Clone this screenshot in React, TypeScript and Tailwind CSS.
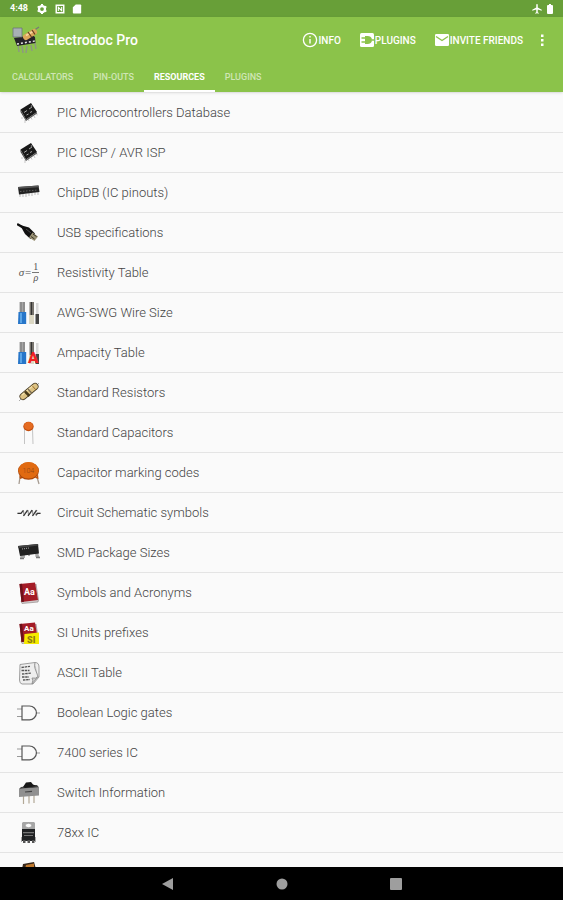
import type { ReactNode } from 'react'

function SoicChip() {
  return (
    <svg viewBox="0 0 24 24" className="size-6">
      <g stroke="#c5c5c5" strokeWidth="1">
        <path d="M5 16v2M8 19v3M11 18l1 2M14 16.500l1 2M17 15l1 2M20 12.500v2M4 9v1" />
      </g>
      <path d="M3.500 8.500 14 2l6 9L9 18.500z" fill="#191919" />
      <path d="M3.500 8.500 9 18.500v1.500L3.500 11z" fill="#444" />
      <path d="m7 11.500 3-2M9.500 14l2-1M12 8l3-2M13 11.500l2-1" stroke="#a8a8a8" strokeWidth="1" />
      <circle cx="14.500" cy="5" r=".8" fill="#999" />
      <path d="M9 18.500 20 11v1.500L9 20z" fill="#555" />
    </svg>
  )
}

function DipChip() {
  return (
    <svg viewBox="0 0 24 24" className="size-6">
      <path d="M3 13v3M6 13v3M9 13v3M12 12v3M15 12v3M18 11v3M21 11v3" stroke="#bbb" strokeWidth="1" />
      <path d="M1 6 21.500 4.500l1 6.500L2 13.500z" fill="#222" />
      <path d="m1 6 20.500-1.500.3 1.700L1.300 7.700z" fill="#555" />
      <path d="M3 10.500 21 9" stroke="#777" strokeWidth=".7" strokeDasharray="1.500 1.500" />
    </svg>
  )
}

function UsbPlug() {
  return (
    <svg viewBox="0 0 24 24" className="size-6">
      <path d="m1 3.500 5 3" stroke="#111" strokeWidth="2.400" strokeLinecap="round" />
      <path d="m3 4 9 2.500 6 6-4.500 5.500L8 13z" fill="#111" />
      <path d="m15.500 11.500 5.500 4-3.500 4.500-5.500-3.500z" fill="#9a9275" />
      <path d="m16 13 3.500 2.500M14 15.500l3.500 2.500" stroke="#3b3729" strokeWidth="1" />
      <path d="m9 8 5 4" stroke="#555" strokeWidth=".8" />
    </svg>
  )
}

function Sigma() {
  return (
    <span className="flex w-6 items-center justify-center gap-px font-['Liberation_Serif',serif] text-[11px] leading-none text-[#555]">
      <i>σ</i>=
      <span className="flex flex-col items-center text-[10px] leading-none">
        <span className="border-b border-[#777] px-px">1</span>
        <i>ρ</i>
      </span>
    </span>
  )
}

function Wires({ red }: { red?: boolean }) {
  return (
    <svg viewBox="0 0 24 24" className="size-6">
      <path d="M2.500 1H8v12H2.500z" fill="#a5a5a5" />
      <path d="M3.500 1h1v12h-1zM6.500 1h1v12h-1z" fill="#777" />
      <path d="M1.500 11h7.700v12H1z" fill="#2776c9" />
      <path d="M3 12h2v10H3z" fill="#5aa4e6" />
      <path d="M12.500 1H17v13h-4.500z" fill="#77736d" />
      <path d="M14 1h1v13h-1z" fill="#333" />
      <path d="M12 14h5v9h-5z" fill="#dcd8c4" />
      <path d="M19 2h2.500v11H19z" fill="#d8d8d8" />
      <path d="M18.500 13H22v10h-3.500z" fill="#444" />
      {red && (
        <text x="11" y="22" fontSize="15" fontWeight="900" fontFamily="Roboto, sans-serif" fill="#f12222">
          A
        </text>
      )}
    </svg>
  )
}

function Resistor() {
  return (
    <svg viewBox="0 0 24 24" className="size-6">
      <path d="m2 20 3-3M18 6l4-4" stroke="#aaa" strokeWidth="1" />
      <path d="M6 15.500 18 5.500" stroke="#453921" strokeWidth="7" strokeLinecap="round" />
      <path d="M6 15.500 18 5.500" stroke="#dcc283" strokeWidth="5.500" strokeLinecap="round" />
      <path d="m5 14 11-9.500" stroke="#f3e2ae" strokeWidth="1.200" />
      <path d="m8 10.500 4.500 4.500" stroke="#473919" strokeWidth="2.500" />
      <path d="m11 8 4 4.500" stroke="#786b54" strokeWidth="1.300" />
      <path d="m15 4.500 4 4.500" stroke="#a16f27" strokeWidth="1" />
    </svg>
  )
}

function DiscCapacitor() {
  return (
    <svg viewBox="0 0 24 24" className="size-6">
      <path d="M7.500 8v15M15.500 8l.5 15" stroke="#c4c4c4" strokeWidth="1" />
      <ellipse cx="11.500" cy="5.500" rx="5.200" ry="4.700" fill="#c34d0d" />
      <ellipse cx="11.500" cy="5" rx="4.400" ry="3.900" fill="#e56c22" />
    </svg>
  )
}

function MarkedCapacitor() {
  return (
    <svg viewBox="0 0 24 24" className="size-6">
      <path d="m3 16-1 7M20 16l2 7" stroke="#a79c92" strokeWidth="1.300" />
      <path d="m2 14 1 4 3-1M21 13l.5 5-3-1" fill="#bd520c" />
      <ellipse cx="11.500" cy="10" rx="10.500" ry="8.700" fill="#a9470b" />
      <ellipse cx="11.500" cy="9.300" rx="10" ry="8.300" fill="#e16a11" />
      <text x="5.500" y="12" fontSize="7" fontFamily="Roboto, sans-serif" fill="#8f4413">
        104
      </text>
    </svg>
  )
}

function ZigZag() {
  return (
    <svg viewBox="0 0 24 24" className="size-6" fill="none" stroke="#333">
      <path d="M.5 12h4l2-2.500.5 5L11 9.500l.5 5 4-5 .5 5 4-5M18 13.500l2-1.500h3.500" strokeWidth=".6" />
      <path d="M.5 12.500H4l2-3M6.500 15l4-6M11 15l4-6M15.500 15l4-6M19 14.500l1.500-2h3" strokeWidth="1.200" />
    </svg>
  )
}

function SmdPackage() {
  return (
    <svg viewBox="0 0 24 24" className="size-6">
      <path d="M4 13h4v4H3zM18 12h3l1.500 4h-4zM11 13h2v2h-2z" fill="#aaa" />
      <path d="M3 17.500h4M19 16.500h4" stroke="#777" strokeWidth="1.500" />
      <path d="m1 5 20-2 1 9.500L3 15z" fill="#202020" />
      <path d="m1 5 20-2 .3 1.500L1.500 7z" fill="#444" />
      <path d="m5 8 7-1" stroke="#999" strokeWidth="1.200" strokeDasharray="1 1" />
    </svg>
  )
}

function Book({ units }: { units?: boolean }) {
  return (
    <svg viewBox="0 0 24 24" className="size-6">
      <path d="m4 20 1 2.500L21 21l.5-2L19 3z" fill="#d0caca" stroke="#8a8080" strokeWidth=".6" />
      <path d="M2.500 3 18 1.500 21 19 4.500 21z" fill="#a41c27" />
      <path d="M2.500 3 5 2.800 7 20.700l-2.500.3z" fill="#6d111a" />
      <text
        x="7"
        y={units ? 10 : 14}
        fontSize={units ? 8 : 9}
        fontWeight="700"
        fontFamily="Roboto, sans-serif"
        fill="#fff"
      >
        Aa
      </text>
      {units && (
        <>
          <path d="M7.500 13 22 11.500V23H7z" fill="#f5ea00" />
          <text x="10" y="21.500" fontSize="9" fontWeight="900" fontFamily="Roboto, sans-serif" fill="#8f7a10">
            SI
          </text>
        </>
      )}
    </svg>
  )
}

function Sheet() {
  return (
    <svg viewBox="0 0 24 24" className="size-6">
      <path d="M3 3.500 18 1.500q4 0 4 4.500v10l-6 7H5q-2.500-.5-2.500-4z" fill="#eee" stroke="#888" strokeWidth=".8" />
      <path d="M18 1.500q-1 3 0 6l3 8-6 7.500q1.500-4 0-6 4 1 6-1.500" fill="#ccc" stroke="#888" strokeWidth=".8" />
      <path
        d="M4.500 6.500 13 5.300M4.500 9.500h8M5 13l9-.8M5 16h7M6 19l7-.5"
        stroke="#555"
        strokeWidth="1.300"
        strokeDasharray="2.500 .7"
      />
    </svg>
  )
}

function AndGate() {
  return (
    <svg viewBox="0 0 24 24" className="size-6" fill="none">
      <path d="M0 8h5M0 15.500h5M19 12h4" stroke="#999" strokeWidth="1" />
      <path d="M5 5h7.500a6.900 6.900 0 0 1 0 13.800H5z" stroke="#555" strokeWidth="1.200" />
    </svg>
  )
}

function SlideSwitch() {
  return (
    <svg viewBox="0 0 24 24" className="size-6">
      <path d="M6.500 14v9M12 14v8.500M17 14v8" stroke="#b3a997" strokeWidth="1.200" />
      <path d="M2 8 22 6.500v8L2 16z" fill="#909090" />
      <path d="m2 8 20-1.500-2-2.500L4 6z" fill="#444" />
      <path d="M6 6 9 1.500l5-.5 2 2.500 4 1.500L8 7z" fill="#161616" />
      <path d="m8 11 7-.7" stroke="#444" strokeWidth="1.200" />
    </svg>
  )
}

function Regulator() {
  return (
    <svg viewBox="0 0 24 24" className="size-6">
      <path d="M6 1h11l1 1v8H5V2z" fill="#a6a6a6" />
      <ellipse cx="11.500" cy="4.500" rx="3.200" ry="2.200" fill="#fafafa" stroke="#888" strokeWidth=".6" />
      <path d="M5 8h13v12H5z" fill="#202224" />
      <path d="M6 11h11v1.200H6zM7 14h9v1H7z" fill="#777" />
      <path d="M4.500 16v5M18.500 16v5" stroke="#aaa" strokeWidth="1" />
      <path d="M6 19h2.500v3H6zM10.500 19H13v3h-2.500zM15 19h2.500v3H15z" fill="#555" />
    </svg>
  )
}

function Transistor() {
  return (
    <svg viewBox="0 0 24 24" className="size-6">
      <path d="m6 3 11-2 2 7H5z" fill="#36271b" />
      <path d="m9 4 8-1.500V8H8z" fill="#c17a2e" />
    </svg>
  )
}

function AppLogo() {
  return (
    <svg viewBox="0 0 28 28" className="size-7">
      <path d="m6 19 1 7M10 20l1 7M15 20l-1 7M19 19l1 6M23 17l1 6" stroke="#8d9784" strokeWidth="1.400" />
      <path d="m2 12 18-3 3 2 .5 6L5 20z" fill="#252329" />
      <path d="M5 18 23 15" stroke="#e6e6e6" strokeWidth="1.500" strokeDasharray="2 2" />
      <path d="M1 2h9v9H1z" fill="#a8b0b4" stroke="#69737a" strokeWidth=".8" />
      <path d="m21 5 6-4" stroke="#777" strokeWidth="1.200" />
      <path d="m14 11 8-5" stroke="#dba65a" strokeWidth="6" strokeLinecap="round" />
      <path d="m14 9.500 7-4" stroke="#f8d79c" strokeWidth="1.500" />
      <path d="m16 6 3.500 5M20 4l3 4.500" stroke="#69401f" strokeWidth="1.300" />
    </svg>
  )
}

function GearIcon() {
  return (
    <svg viewBox="0 0 24 24" className="size-3" fill="none" stroke="#fff">
      <circle cx="12" cy="12" r="6" strokeWidth="4.500" />
      <path d="M12 2v3M12 19v3M3.300 7l2.700 1.500M18 15.500l2.700 1.500M3.300 17 6 15.500M18 8.500 20.700 7" strokeWidth="4" />
    </svg>
  )
}

function NfcIcon() {
  return (
    <svg viewBox="0 0 24 24" className="size-2.5" fill="none" stroke="#fff">
      <path d="M3 3h18v18H3z" strokeWidth="3.500" />
      <path d="M8 17V8l8 8V7" strokeWidth="2.500" />
    </svg>
  )
}

function SdCardIcon() {
  return (
    <svg viewBox="0 0 24 24" className="size-2.5" fill="#fff">
      <path d="M9 1h11q2 0 2 2v18q0 2-2 2H4q-2 0-2-2V8z" />
    </svg>
  )
}

function AirplaneIcon() {
  return (
    <svg viewBox="0 0 24 24" className="size-3" fill="#fff">
      <path d="M21.500 15.500v-2L13.500 9V3.500a1.500 1.500 0 0 0-3 0V9l-8 4.500v2l8-2.500v5.500l-2 1.500V21.500l3.500-1 3.500 1V20l-2-1.500V13z" />
    </svg>
  )
}

function BatteryIcon() {
  return (
    <svg viewBox="0 0 6 12" className="h-3 w-1.5" fill="#fff">
      <path d="M2 1h2v1h1q1 0 1 1v7q0 1-1 1H1q-1 0-1-1V3q0-1 1-1h1z" />
    </svg>
  )
}

function InfoIcon() {
  return (
    <svg viewBox="0 0 16 16" className="size-4" fill="none" stroke="#fff">
      <circle cx="8" cy="8" r="6.600" strokeWidth="1.300" />
      <path d="M8 7v4.500M8 4v1.500" strokeWidth="1.400" />
    </svg>
  )
}

function PluginIcon() {
  return (
    <svg viewBox="0 0 16 16" className="size-4">
      <rect x="1" y="1" width="14" height="14" rx="1.500" fill="#fff" />
      <path d="M6 4h2.500c2.500 0 4.500 1.500 4.500 4s-2 4-4.500 4H6z" fill="#8bc34a" />
      <path d="M2.500 6H6M2.500 10H6M13 8h3" stroke="#8bc34a" strokeWidth="1.300" />
    </svg>
  )
}

function MailIcon() {
  return (
    <svg viewBox="0 0 16 16" className="size-4">
      <rect x="1" y="2" width="14" height="12" rx="1.300" fill="#fff" />
      <path d="m2 4.500 6 4 6-4" fill="none" stroke="#8bc34a" strokeWidth="1.400" />
    </svg>
  )
}

const tabs = ['CALCULATORS', 'PIN-OUTS', 'RESOURCES', 'PLUGINS']

const resources: { label: string; icon: ReactNode }[] = [
  { label: 'PIC Microcontrollers Database', icon: <SoicChip /> },
  { label: 'PIC ICSP / AVR ISP', icon: <SoicChip /> },
  { label: 'ChipDB (IC pinouts)', icon: <DipChip /> },
  { label: 'USB specifications', icon: <UsbPlug /> },
  { label: 'Resistivity Table', icon: <Sigma /> },
  { label: 'AWG-SWG Wire Size', icon: <Wires /> },
  { label: 'Ampacity Table', icon: <Wires red /> },
  { label: 'Standard Resistors', icon: <Resistor /> },
  { label: 'Standard Capacitors', icon: <DiscCapacitor /> },
  { label: 'Capacitor marking codes', icon: <MarkedCapacitor /> },
  { label: 'Circuit Schematic symbols', icon: <ZigZag /> },
  { label: 'SMD Package Sizes', icon: <SmdPackage /> },
  { label: 'Symbols and Acronyms', icon: <Book /> },
  { label: 'SI Units prefixes', icon: <Book units /> },
  { label: 'ASCII Table', icon: <Sheet /> },
  { label: 'Boolean Logic gates', icon: <AndGate /> },
  { label: '7400 series IC', icon: <AndGate /> },
  { label: 'Switch Information', icon: <SlideSwitch /> },
  { label: '78xx IC', icon: <Regulator /> },
]

function StatusBar() {
  return (
    <div className="flex h-[17px] shrink-0 items-center bg-[#689f38] px-2.5 text-white">
      <span className="text-[9px] font-bold">4:48</span>
      <div className="ml-2 flex items-center gap-[7px]">
        <GearIcon />
        <NfcIcon />
        <SdCardIcon />
      </div>
      <div className="ml-auto flex items-center gap-1">
        <AirplaneIcon />
        <BatteryIcon />
      </div>
    </div>
  )
}

function Header() {
  return (
    <header className="z-10 shrink-0 bg-[#8bc34a] text-white shadow-sm">
      <div className="flex h-[46px] items-center px-3">
        <AppLogo />
        <h1 className="ml-1.5 text-sm font-medium">Electrodoc Pro</h1>
        <div className="ml-auto flex items-center gap-[18px] text-[10px] font-medium">
          <button className="flex items-center">
            <InfoIcon />
            INFO
          </button>
          <button className="flex items-center">
            <PluginIcon />
            PLUGINS
          </button>
          <button className="flex items-center">
            <MailIcon />
            INVITE FRIENDS
          </button>
        </div>
        <button className="ml-3" aria-label="More options">
          <svg viewBox="0 0 16 16" className="size-4" fill="#fff">
            <path d="M6 2.500h2.500V5H6zM6 7h2.500v2.500H6zM6 11.500h2.500V14H6z" />
          </svg>
        </button>
      </div>
      <nav className="flex h-[29px] pl-0.5 text-[9px] font-medium">
        {tabs.map((tab) => (
          <button
            key={tab}
            className={
              tab === 'RESOURCES'
                ? 'border-b-2 border-white px-2.5 pt-0.5 font-bold'
                : 'border-b-2 border-transparent px-2.5 pt-0.5 text-white/60'
            }
          >
            {tab}
          </button>
        ))}
      </nav>
    </header>
  )
}

export default function App() {
  return (
    <div className="flex h-screen flex-col bg-[#fafafa] font-[Roboto,sans-serif]">
      <StatusBar />
      <Header />
      <ul className="min-h-0 flex-1 overflow-hidden pt-px">
        {resources.map((item) => (
          <li key={item.label} className="border-b border-[#e4e4e4]">
            <a href="#" className="flex h-[39px] items-center gap-4 px-[17px] text-[13px] font-light text-[#444]">
              {item.icon}
              {item.label}
            </a>
          </li>
        ))}
        <li className="flex h-10 items-center px-[17px]">
          <Transistor />
        </li>
      </ul>
      <div className="flex h-[33px] shrink-0 items-center justify-center gap-[102px] bg-black">
        <button aria-label="Back">
          <svg viewBox="0 0 12 12" className="size-3" fill="#9e9e9e">
            <path d="M11 0v12L0 6z" />
          </svg>
        </button>
        <button aria-label="Home">
          <svg viewBox="0 0 12 12" className="size-3" fill="#9e9e9e">
            <circle cx="6" cy="6" r="5.500" />
          </svg>
        </button>
        <button aria-label="Recent apps">
          <svg viewBox="0 0 12 12" className="size-3" fill="#9e9e9e">
            <rect width="12" height="12" rx="1" />
          </svg>
        </button>
      </div>
    </div>
  )
}
